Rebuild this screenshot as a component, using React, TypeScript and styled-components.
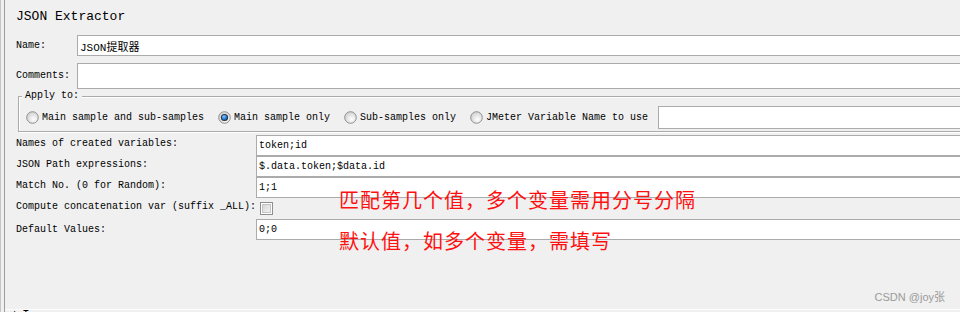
import styled, { createGlobalStyle } from 'styled-components'

const GlobalStyle = createGlobalStyle`
  html, body {
    margin: 0;
    padding: 0;
    background: #f0f0f0;
  }
  body {
    overflow: hidden;
  }
`

const Screen = styled.div`
  position: relative;
  width: 960px;
  height: 312px;
  overflow: hidden;
  box-sizing: border-box;
  background: #f0f0f0;
  border-left: 1px solid #c6c6c6;
  padding-left: 3px;
  font-family: "Liberation Mono", "Noto Sans CJK SC", monospace;
  font-size: 10px;
  color: #000;
`

const Frame = styled.div`
  height: 100%;
  display: flex;
  flex-direction: column;
  border-left: 1px solid #9c9c9c;
  overflow: hidden;
`

const Content = styled.div`
  flex: 1;
  display: flex;
  flex-direction: column;
  padding-left: 11px;
  overflow: hidden;
`

const Title = styled.div`
  margin-top: 9px;
  height: 16px;
  line-height: 16px;
  font-size: 13px;
`

const Row = styled.div<{ $label: number; $top?: number; $height: number }>`
  display: grid;
  grid-template-columns: ${p => p.$label}px 1fr;
  align-items: center;
  height: ${p => p.$height}px;
  margin-top: ${p => p.$top ?? 0}px;
`

const Label = styled.span<{ $lift?: number }>`
  line-height: 12px;
  white-space: nowrap;
  position: relative;
  top: ${p => -(p.$lift ?? 0)}px;
`

const Field = styled.input<{ $height: number; $size?: number }>`
  box-sizing: border-box;
  width: calc(100% + 4px);
  height: ${p => p.$height}px;
  margin: 0;
  padding: 0 2px;
  border: 1px solid #ababab;
  background: #fff;
  font-family: "Liberation Mono", "Noto Sans CJK SC", monospace;
  font-size: ${p => p.$size ?? 10}px;
  color: #000;
  outline: none;
`

const Group = styled.fieldset`
  margin: 1px -4px 0 2px;
  min-width: 0;
  padding: 4px 0 2px 7px;
  border: 1px solid #ababab;
  box-shadow: inset 1px 1px 0 #fff, 1px 1px 0 #fff;
`

const GroupTitle = styled.legend`
  margin-left: -4px;
  padding: 0 3px;
  line-height: 12px;
  background: #f0f0f0;
`

const RadioLine = styled.div`
  display: flex;
  align-items: center;
  gap: 14px;
`

const RadioItem = styled.label`
  display: inline-flex;
  align-items: center;
  gap: 3px;
  white-space: nowrap;
  line-height: 12px;
`

const GroupField = styled(Field)`
  flex: 1;
  margin-left: -4px;
`

const VarRows = styled.div`
  display: flex;
  flex-direction: column;
  gap: 1px;
  margin-top: 3px;
`

const CheckCell = styled.div`
  display: flex;
  align-items: center;
  padding-left: 4px;
`

const Footer = styled.div`
  height: 2px;
  border-top: 1px solid #fdfdfd;
  padding-left: 6px;
  overflow: hidden;
  font-size: 12px;
  line-height: 12px;
  letter-spacing: 4px;
`

const Notes = styled.div`
  position: absolute;
  left: 338px;
  top: 188px;
  display: flex;
  flex-direction: column;
  gap: 17px;
  font-family: "Noto Sans CJK SC", sans-serif;
  font-size: 20px;
  line-height: 24px;
  letter-spacing: 1px;
  color: #ff1010;
  pointer-events: none;
`

const Watermark = styled.div`
  position: absolute;
  right: 15px;
  bottom: 8px;
  font-family: "Liberation Sans", "Noto Sans CJK SC", sans-serif;
  font-size: 11px;
  line-height: 13px;
  color: #9a9a9a;
`

const Radio = ({ checked }: { checked?: boolean }) => (
  <svg width="13" height="13" viewBox="0 0 13 13">
    <defs>
      <radialGradient id={checked ? 'rOn' : 'rOff'} cx="0.6" cy="0.65" r="0.6">
        <stop offset="0" stopColor="#ffffff" />
        <stop offset="1" stopColor="#d4d4d4" />
      </radialGradient>
      <radialGradient id="dot" cx="0.4" cy="0.35" r="0.7">
        <stop offset="0" stopColor="#8cc8ff" />
        <stop offset="0.6" stopColor="#2a7ad2" />
        <stop offset="1" stopColor="#124a86" />
      </radialGradient>
    </defs>
    <circle cx="6.5" cy="6.5" r="5.8" fill={`url(#${checked ? 'rOn' : 'rOff'})`} stroke="#8e8f8f" strokeWidth="1" />
    {checked && (
      <>
        <circle cx="6.5" cy="6.5" r="3.6" fill="#2b2b2b" />
        <circle cx="6.5" cy="6.5" r="2.8" fill="url(#dot)" />
      </>
    )}
  </svg>
)

const CheckBox = () => (
  <svg width="13" height="13" viewBox="0 0 13 13">
    <defs>
      <linearGradient id="cb" x1="0" y1="0" x2="1" y2="1">
        <stop offset="0" stopColor="#d6d6d6" />
        <stop offset="1" stopColor="#f4f4f4" />
      </linearGradient>
    </defs>
    <rect x="0.5" y="0.5" width="12" height="12" fill="#fff" stroke="#8f8f8f" />
    <rect x="2.5" y="2.5" width="8" height="8" fill="url(#cb)" stroke="#c4c4c4" />
  </svg>
)

const applyOptions = [
  { label: 'Main sample and sub-samples', checked: false },
  { label: 'Main sample only', checked: true },
  { label: 'Sub-samples only', checked: false },
  { label: 'JMeter Variable Name to use', checked: false },
]

const App = () => (
  <>
    <GlobalStyle />
    <Screen>
      <Frame>
        <Content>
          <Title>JSON Extractor</Title>

          <Row $label={61} $top={10} $height={21}>
            <Label>Name:</Label>
            <Field $height={21} $size={11} readOnly defaultValue="JSON提取器" />
          </Row>

          <Row $label={61} $top={7} $height={26}>
            <Label>Comments:</Label>
            <Field $height={26} readOnly defaultValue="" />
          </Row>

          <Group>
            <GroupTitle>Apply to:</GroupTitle>
            <RadioLine>
              {applyOptions.map(o => (
                <RadioItem key={o.label}>
                  <Radio checked={o.checked} />
                  {o.label}
                </RadioItem>
              ))}
              <GroupField $height={23} readOnly defaultValue="" />
            </RadioLine>
          </Group>

          <VarRows>
            <Row $label={240} $height={20}>
              <Label $lift={2}>Names of created variables:</Label>
              <Field $height={21} readOnly defaultValue="token;id" />
            </Row>
            <Row $label={240} $height={20}>
              <Label $lift={2}>JSON Path expressions:</Label>
              <Field $height={21} readOnly defaultValue="$.data.token;$data.id" />
            </Row>
            <Row $label={240} $height={20}>
              <Label $lift={2}>Match No. (0 for Random):</Label>
              <Field $height={21} readOnly defaultValue="1;1" />
            </Row>
            <Row $label={240} $height={20}>
              <Label $lift={1}>Compute concatenation var (suffix _ALL):</Label>
              <CheckCell>
                <CheckBox />
              </CheckCell>
            </Row>
            <Row $label={240} $height={20}>
              <Label>Default Values:</Label>
              <Field $height={21} readOnly defaultValue="0;0" />
            </Row>
          </VarRows>
        </Content>
        <Footer>±I</Footer>
      </Frame>

      <Notes>
        <span>匹配第几个值，多个变量需用分号分隔</span>
        <span>默认值，如多个变量，需填写</span>
      </Notes>

      <Watermark>CSDN @joy张</Watermark>
    </Screen>
  </>
)

export default App
